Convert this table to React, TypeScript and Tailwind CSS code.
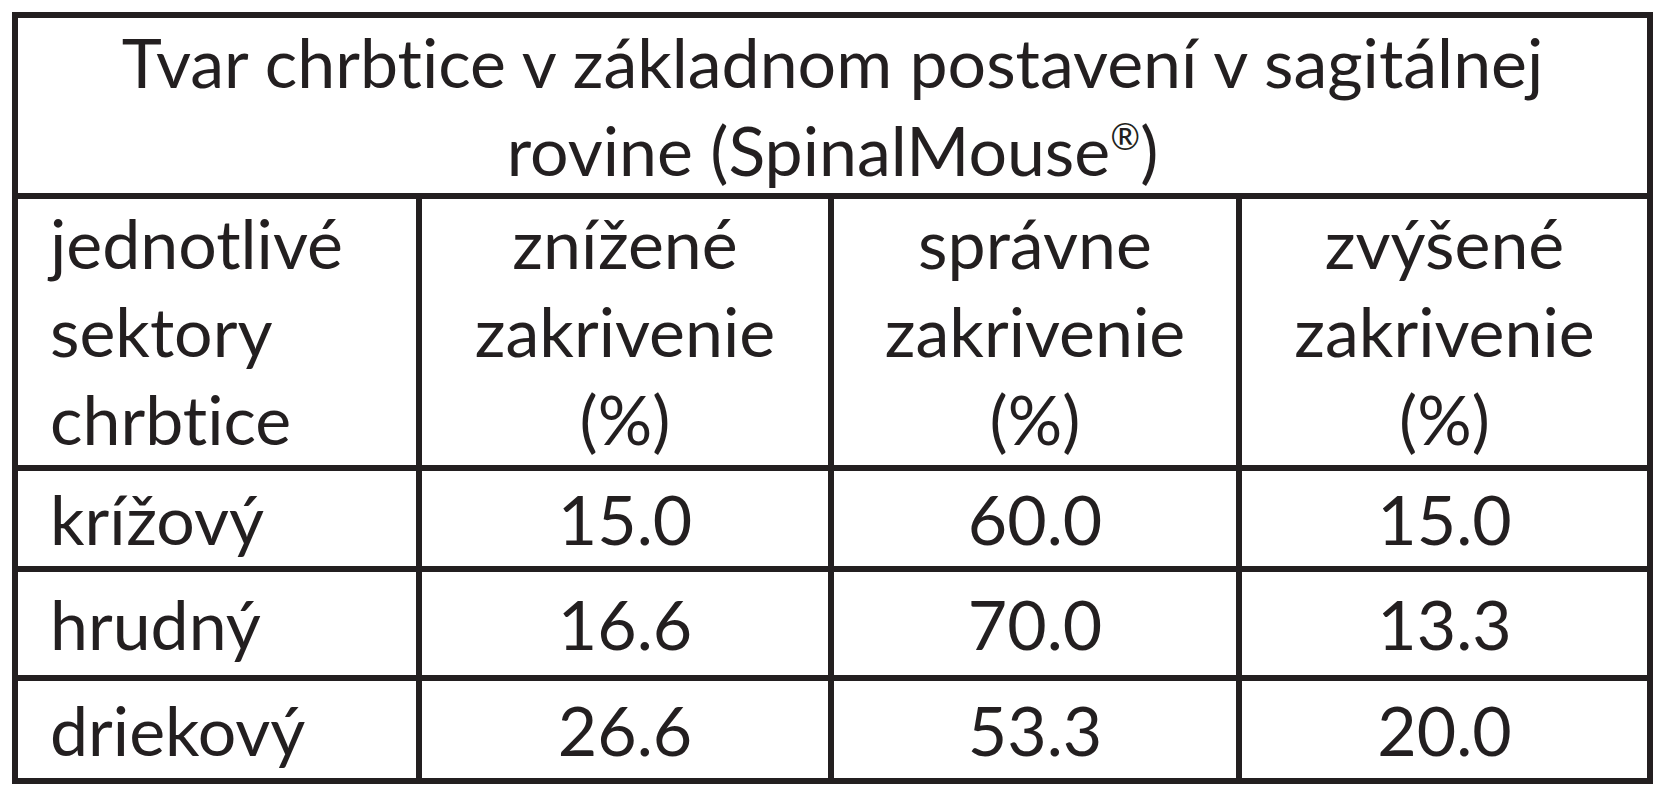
const cols = ["w-[404px]", "w-[412px]", "w-[408px]", "w-[411px]"];

const rows = [
  { name: "krížový", values: ["15.0", "60.0", "15.0"], h: "h-[101px]" },
  { name: "hrudný", values: ["16.6", "70.0", "13.3"], h: "h-[109px]" },
  { name: "driekový", values: ["26.6", "53.3", "20.0"], h: "h-[103px]" },
];

const headers = [
  ["znížené", "zakrivenie", "(%)"],
  ["správne", "zakrivenie", "(%)"],
  ["zvýšené", "zakrivenie", "(%)"],
];

export default function App() {
  return (
    <div className="min-h-screen bg-white p-3 font-['Lato','Carlito','Liberation_Sans',sans-serif] text-[#231f20] [font-variant-ligatures:none]">
      <div className="grid w-fit grid-cols-[404px_412px_408px_411px] border-l-[6px] border-t-[6px] border-[#231f20] text-[68px] leading-[88px]">
        {/* title row */}
        <div className="col-span-4 flex h-[181px] flex-col items-center border-b-[6px] border-r-[6px] border-[#231f20] text-center">
          <span>Tvar chrbtice v základnom postavení v sagitálnej</span>
          <span>
            rovine (SpinalMouse
            <span className="relative -top-[26px] text-[36px]">®</span>)
          </span>
        </div>

        {/* sub header */}
        <div className={`${cols[0]} flex h-[272px] flex-col border-b-[6px] border-r-[6px] border-[#231f20] pl-[32px]`}>
          <span>jednotlivé</span>
          <span>sektory</span>
          <span>chrbtice</span>
        </div>
        {headers.map((lines, i) => (
          <div
            key={i}
            className="flex h-[272px] flex-col items-center border-b-[6px] border-r-[6px] border-[#231f20] text-center"
          >
            {lines.map((l) => (
              <span key={l}>{l}</span>
            ))}
          </div>
        ))}

        {/* data rows */}
        {rows.map((row) => (
          <div key={row.name} className="contents">
            <div className={`${row.h} flex items-center border-b-[6px] border-r-[6px] border-[#231f20] pl-[32px]`}>
              {row.name}
            </div>
            {row.values.map((v, i) => (
              <div
                key={i}
                className={`${row.h} flex items-center justify-center border-b-[6px] border-r-[6px] border-[#231f20]`}
              >
                {v}
              </div>
            ))}
          </div>
        ))}
      </div>
    </div>
  );
}
